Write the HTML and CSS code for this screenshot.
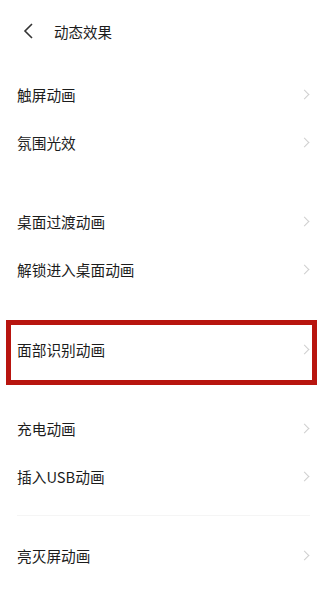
FILE: index.html
```html
<!DOCTYPE html>
<html lang="zh-CN">
<head>
    <meta charset="UTF-8">
    <meta name="viewport" content="width=device-width, initial-scale=1.0">
    <title>动态效果</title>
    <link rel="stylesheet" href="styles.css">
</head>
<body>
    <div class="header">
        <svg class="back" width="12" height="16" viewBox="0 0 12 16">
            <path d="M10 1 L3 8 L10 15" fill="none" stroke="#333" stroke-width="1.6"/>
        </svg>
        <span class="title">动态效果</span>
    </div>

    <div class="list">
        <div class="group">
            <div class="row"><span>触屏动画</span><i class="arrow"></i></div>
            <div class="row"><span>氛围光效</span><i class="arrow"></i></div>
        </div>
        <div class="sep"></div>
        <div class="group">
            <div class="row"><span>桌面过渡动画</span><i class="arrow"></i></div>
            <div class="row"><span>解锁进入桌面动画</span><i class="arrow"></i></div>
        </div>
        <div class="sep"></div>
        <div class="group">
            <div class="mark">
                <div class="row"><span>面部识别动画</span><i class="arrow"></i></div>
            </div>
        </div>
        <div class="sep"></div>
        <div class="group">
            <div class="row"><span>充电动画</span><i class="arrow"></i></div>
            <div class="row"><span>插入USB动画</span><i class="arrow"></i></div>
        </div>
        <div class="sep line"></div>
        <div class="group">
            <div class="row"><span>亮灭屏动画</span><i class="arrow"></i></div>
        </div>
    </div>
</body>
</html>
```

FILE: styles.css
```css
body {
    margin: 0;
    background: #fff;
    color: #1c1c1c;
    font-family: "Noto Sans CJK SC", "Noto Sans", sans-serif;
    font-size: 14.7px;
}
.header {
    height: 62px;
    display: flex;
    align-items: center;
    padding-left: 22px;
}
.back {
    display: block;
    margin-top: -1px;
}
.title {
    margin-left: 20px;
    font-size: 14.5px;
    color: #1c1c1c;
}
.list {
    margin-top: 8px;
}
.row {
    height: 48px;
    display: flex;
    align-items: center;
    justify-content: space-between;
    padding: 0 14px 0 17px;
}
.arrow {
    width: 6px;
    height: 6px;
    border-top: 1.2px solid #cfcfcf;
    border-right: 1.2px solid #cfcfcf;
    transform: rotate(45deg);
    margin-right: 2px;
}
.sep {
    height: 31px;
    display: flex;
    align-items: center;
}
.line::after {
    content: "";
    flex: 1;
    height: 1px;
    margin: 0 14px 0 17px;
    background: #f5f5f5;
}
.mark {
    margin: -4px 7px -12px 6px;
    border: 5px solid #b8150f;
    padding: 0 0 7px 0;
}
.mark .row {
    padding-left: 6px;
    padding-right: 2px;
}
```
